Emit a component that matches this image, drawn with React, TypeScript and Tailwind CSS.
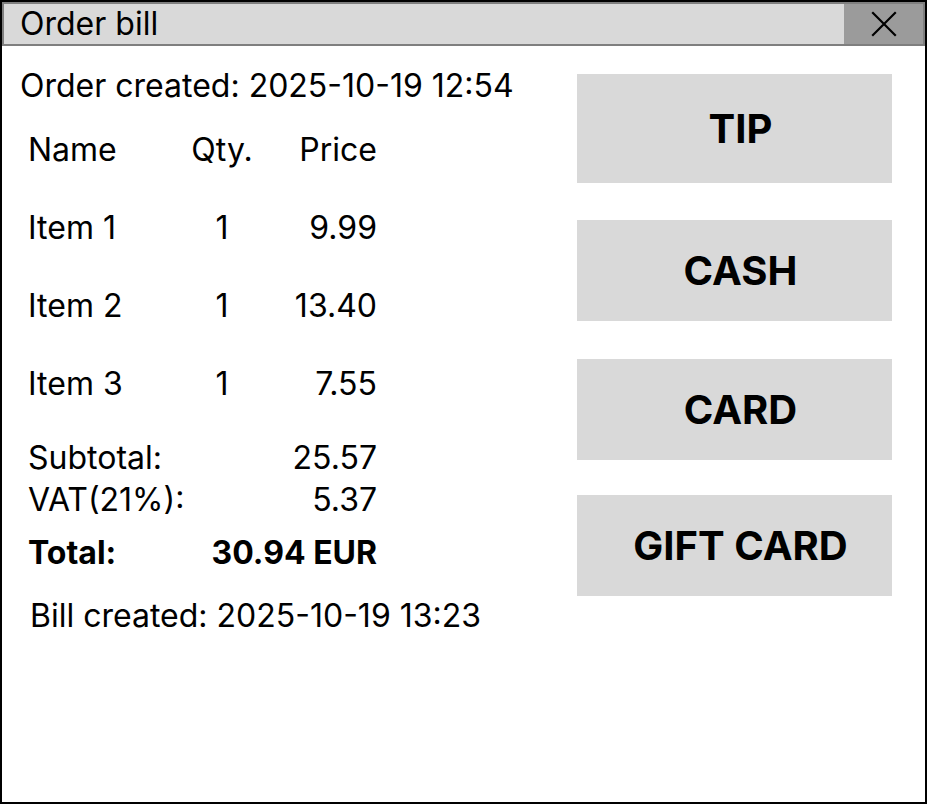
const items = [
    { name: 'Item 1', qty: 1, price: '9.99' },
    { name: 'Item 2', qty: 1, price: '13.40' },
    { name: 'Item 3', qty: 1, price: '7.55' },
];

const actions = [
    { label: 'TIP', h: 'h-[109px]', mt: 'mt-[28px]' },
    { label: 'CASH', h: 'h-[101px]', mt: 'mt-[37px]' },
    { label: 'CARD', h: 'h-[101px]', mt: 'mt-[38px]' },
    { label: 'GIFT CARD', h: 'h-[101px]', mt: 'mt-[35px]' },
];

function CloseIcon() {
    return (
        <svg width="26" height="26" viewBox="0 0 26 26" fill="none">
            <path d="M2 2 L24 24 M24 2 L2 24" stroke="#000" strokeWidth="2.2" strokeLinecap="square" />
        </svg>
    );
}

export default function App() {
    return (
        <div
            className="w-[927px] h-[804px] border-2 border-black bg-white flex flex-col text-black"
            style={{ fontFamily: 'Inter, "Noto Sans", sans-serif' }}
        >
            {/* title bar */}
            <div className="h-[44px] bg-[#d9d9d9] border-2 border-[#7f7f7f] flex items-stretch">
                <div className="flex-1 pl-[16px] flex items-center text-[32px] leading-none">Order bill</div>
                <button className="w-[79px] bg-[#9b9b9b] flex items-center justify-center">
                    <CloseIcon />
                </button>
            </div>

            <div className="flex flex-1">
                {/* bill */}
                <div className="w-[575px] pl-[18px] text-[32px] leading-[38px] whitespace-nowrap">
                    <div className="mt-[21px]">Order created: 2025-10-19 12:54</div>
                    <div className="ml-[8px] mt-[6px] w-[349px]">
                        <div className="grid grid-cols-[152px_84px_113px] h-[78px] items-center">
                            <span>Name</span>
                            <span className="text-center">Qty.</span>
                            <span className="text-right">Price</span>
                        </div>
                        {items.map((it) => (
                            <div key={it.name} className="grid grid-cols-[152px_84px_113px] h-[78px] items-center">
                                <span>{it.name}</span>
                                <span className="text-center">{it.qty}</span>
                                <span className="text-right">{it.price}</span>
                            </div>
                        ))}
                        <div className="mt-[14px] flex justify-between h-[42px] items-center">
                            <span>Subtotal:</span>
                            <span>25.57</span>
                        </div>
                        <div className="flex justify-between h-[42px] items-center">
                            <span>VAT(21%):</span>
                            <span>5.37</span>
                        </div>
                        <div className="mt-[11px] flex justify-between h-[42px] items-center font-bold">
                            <span>Total:</span>
                            <span>30.94 EUR</span>
                        </div>
                    </div>
                    <div className="mt-[23px] ml-[10px]">Bill created: 2025-10-19 13:23</div>
                </div>

                {/* payment actions */}
                <div className="w-[315px] flex flex-col">
                    {actions.map((a) => (
                        <button
                            key={a.label}
                            className={`${a.h} ${a.mt} bg-[#d9d9d9] flex items-center justify-center pl-[12px] text-[40px] font-bold`}
                        >
                            {a.label}
                        </button>
                    ))}
                </div>
            </div>
        </div>
    );
}
